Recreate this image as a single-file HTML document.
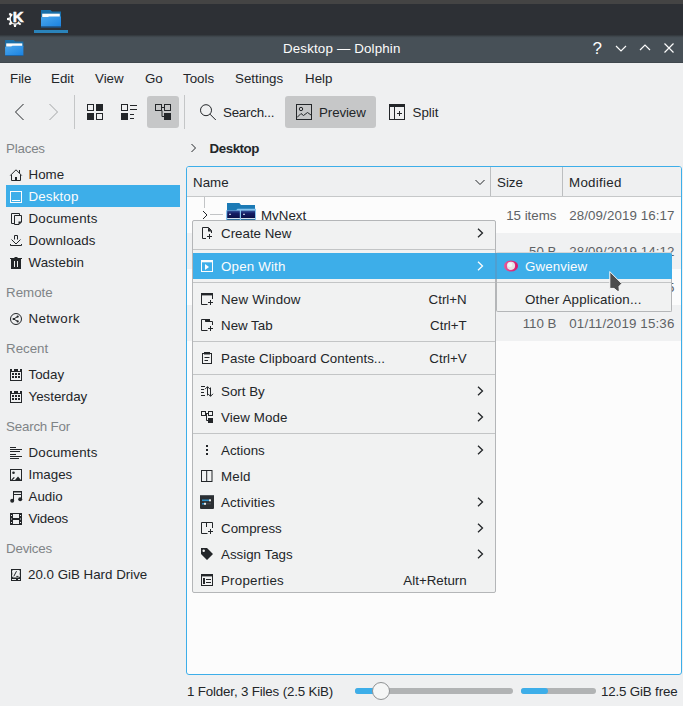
<!DOCTYPE html>
<html><head><meta charset="utf-8"><title>Desktop — Dolphin</title>
<style>
*{box-sizing:border-box;margin:0;padding:0}
html,body{width:683px;height:706px;overflow:hidden;background:#eff0f1}
body{position:relative;font-family:"Liberation Sans",sans-serif;font-size:13.33px;color:#232629;line-height:16px}
.a{position:absolute;white-space:nowrap}
svg{position:absolute;overflow:visible}
.t{position:absolute;white-space:nowrap;height:16px;line-height:16px;margin-top:2px}
.g{color:#7f8487}
.w{color:#fcfcfc}
.i{color:#5e6265}
.sep{position:absolute;background:#c3c5c6;height:1px}
.s{fill:none;stroke:#232629;stroke-width:1}
.f{fill:#232629;stroke:none}
</style></head><body>

<div class="a" style="left:0px;top:0px;width:683px;height:4px;background:#444444;"></div>
<div class="a" style="left:0px;top:4px;width:683px;height:31px;background:#2d3035;"></div>
<div class="a" style="left:34px;top:30px;width:34px;height:3px;background:#2a83ba;"></div>
<div class="a" style="left:0px;top:35px;width:683px;height:28px;background:linear-gradient(#30353a 0,#444c53 2px,#475057 3px);"></div>
<div class="a" style="left:0px;top:62px;width:683px;height:1px;background:#3f474d;"></div>
<svg style="left:6px;top:9px" width="18" height="20" viewBox="0 0 18 20"><path d="M13.73 11.27A4.90 4.90 0 1 1 7.73 5.27" fill="none" stroke="#fcfcfc" stroke-width="1.40"/><path d="M11.62 14.74L14.02 16.29L15.29 15.02L13.74 12.62ZM7.50 15.20L8.10 18.00L9.90 18.00L10.50 15.20ZM4.26 12.62L2.71 15.02L3.98 16.29L6.38 14.74ZM3.80 8.50L1.00 9.10L1.00 10.90L3.80 11.50ZM6.38 5.26L3.98 3.71L2.71 4.98L4.26 7.38Z" fill="#fcfcfc"/><text x="6.7" y="13" font-family="Liberation Sans,sans-serif" font-weight="bold" font-size="15" fill="#2d3035" stroke="#2d3035" stroke-width="2.6">K</text><text x="6.7" y="13" font-family="Liberation Sans,sans-serif" font-weight="bold" font-size="15" fill="#fcfcfc" stroke="#fcfcfc" stroke-width="0.5">K</text></svg>
<svg style="left:41px;top:10px" width="20" height="17.5" viewBox="0 0 20 17.5"><defs><linearGradient id="fg41" x1="0" y1="0" x2="1" y2="1"><stop offset="0" stop-color="#4aa8ee"/><stop offset="1" stop-color="#1b82e0"/></linearGradient></defs>
<path d="M0 0H9.500L11 1.600H20V8H0Z" fill="#1a6fa8"/><rect x="1.200" y="3.700" width="17.600" height="3.600" fill="#fcfcfc"/><path d="M0 7.300H6.500L8 6.400H20V16.600H0Z" fill="url(#fg41)"/><rect x="0" y="16.600" width="20" height="0.900" fill="#1565b0"/></svg>
<svg style="left:5px;top:40px" width="18.5" height="16" viewBox="0 0 20 17.5"><defs><linearGradient id="fg5" x1="0" y1="0" x2="1" y2="1"><stop offset="0" stop-color="#4aa8ee"/><stop offset="1" stop-color="#1b82e0"/></linearGradient></defs>
<path d="M0 0H9.500L11 1.600H20V8H0Z" fill="#1a6fa8"/><rect x="1.200" y="3.700" width="17.600" height="3.600" fill="#fcfcfc"/><path d="M0 7.300H6.500L8 6.400H20V16.600H0Z" fill="url(#fg5)"/><rect x="0" y="16.600" width="20" height="0.900" fill="#1565b0"/></svg>
<div class="t w" style="left:283px;top:39px;letter-spacing:0.16px">Desktop — Dolphin</div>
<svg style="left:583px;top:35px" width="100" height="28" viewBox="0 0 100 28"><g fill="none" stroke="#fcfcfc" stroke-width="1.2"><path d="M33 11 L38 16 L43 11"/><path d="M57 15 L62 10 L67 15"/><path d="M81.5 8.5 L90.5 17.5 M90.5 8.5 L81.5 17.5"/></g></svg>
<div class="t w" style="left:593px;top:39px;font-size:17px;left:592.5px">?</div>
<div class="t " style="left:10px;top:69px;">File</div>
<div class="t " style="left:51px;top:69px;">Edit</div>
<div class="t " style="left:95px;top:69px;">View</div>
<div class="t " style="left:145px;top:69px;">Go</div>
<div class="t " style="left:183px;top:69px;">Tools</div>
<div class="t " style="left:235px;top:69px;">Settings</div>
<div class="t " style="left:305px;top:69px;">Help</div>
<div class="a" style="left:74px;top:95px;width:1px;height:34px;background:#c4c6c7;"></div>
<div class="a" style="left:184px;top:95px;width:1px;height:34px;background:#c4c6c7;"></div>
<div class="a" style="left:147px;top:96px;width:32px;height:32px;background:#c6c7c8;border-radius:3px"></div>
<div class="a" style="left:285px;top:96px;width:91px;height:32px;background:#c6c7c8;border-radius:3px"></div>
<svg style="left:11px;top:101px" width="22" height="22" viewBox="0 0 22 22"><path class="s" stroke-width="1.1" d="M12.5 3 L4.5 11 L12.5 19"/></svg>
<svg style="left:45px;top:101px" width="22" height="22" viewBox="0 0 22 22"><path class="s" style="stroke:#a3a5a6" stroke-width="1.1" d="M4.5 3 L12.5 11 L4.5 19"/></svg>
<svg style="left:84px;top:101px" width="22" height="22" viewBox="0 0 22 22"><rect class="s" x="3.5" y="3.5" width="6" height="6"/><rect class="f" x="12" y="3" width="7" height="7"/><rect class="f" x="3" y="12" width="7" height="7"/><rect class="s" x="12.5" y="12.5" width="6" height="6"/></svg>
<svg style="left:118px;top:101px" width="22" height="22" viewBox="0 0 22 22"><rect class="s" x="3.5" y="3.5" width="6" height="6"/><rect class="f" x="3" y="12" width="7" height="7"/><path class="s" d="M12 4.5H19M12 8.5H19M12 13.5H16M12 17.5H16"/></svg>
<svg style="left:152px;top:101px" width="22" height="22" viewBox="0 0 22 22"><rect class="s" x="3.5" y="3.5" width="6" height="6"/><rect class="s" x="12.5" y="3.5" width="6" height="6"/><rect class="f" x="12" y="12" width="7" height="7"/><path class="s" d="M10 6.500H12M10 9.500V15.500H12" stroke-width="1.100"/></svg>
<svg style="left:196px;top:101px" width="22" height="22" viewBox="0 0 22 22"><circle class="s" cx="10" cy="9.200" r="5.500" stroke-width="1.3"/><path class="s" stroke-width="1.4" d="M13.900 13.100 L19.800 19"/></svg>
<div class="t " style="left:223px;top:103px;letter-spacing:-0.23px;">Search...</div>
<svg style="left:293px;top:101px" width="22" height="22" viewBox="0 0 22 22"><rect class="s" x="3.5" y="3.5" width="15" height="15"/><circle class="s" cx="8" cy="8" r="1.7"/><path class="s" d="M4 16.5 L8 12.5 L10.5 14.5 L14.5 11.5 L18 14"/></svg>
<div class="t " style="left:319px;top:103px;letter-spacing:-0.1px;">Preview</div>
<svg style="left:386px;top:101px" width="22" height="22" viewBox="0 0 22 22"><rect class="s" x="3.5" y="3.5" width="15" height="15"/><rect class="f" x="3" y="3" width="16" height="3"/><path class="s" d="M8.500 5V18.500M11 12.500H16M13.500 10V15"/></svg>
<div class="t " style="left:412.5px;top:103px;">Split</div>
<div class="t g" style="left:6px;top:139px;letter-spacing:-0.2px;">Places</div>
<svg style="left:8px;top:167px" width="16" height="16" viewBox="0 0 16 16"><path class="s" d="M2.3 8.5 L8 2.8 L13.7 8.5" stroke-width="1.2"/><path class="s" d="M3.5 8V13.5H12.5V8"/><rect class="f" x="7" y="10" width="2" height="4"/><rect class="f" x="11" y="3" width="1" height="3"/></svg>
<div class="t " style="left:28.5px;top:165px;">Home</div>
<div class="a" style="left:6px;top:185px;width:174px;height:22px;background:#3daee9;"></div>
<svg style="left:8px;top:189px" width="16" height="16" viewBox="0 0 16 16"><rect x="2.5" y="2.5" width="11" height="11" fill="none" stroke="#fcfcfc"/><rect x="4" y="11" width="8" height="1" fill="#fcfcfc"/></svg>
<div class="t w" style="left:28.5px;top:187px;letter-spacing:0.15px">Desktop</div>
<svg style="left:8px;top:211px" width="16" height="16" viewBox="0 0 16 16"><path class="s" d="M11.5 4V2.500H3.500V12.500H6" stroke-width="1.1"/><path class="s" d="M6.500 4.500H13.500V11L11 13.500H6.500Z" stroke-width="1.1"/><path class="f" d="M14 10.500H10.500V14Z"/></svg>
<div class="t " style="left:28.5px;top:209px;letter-spacing:0.18px;">Documents</div>
<svg style="left:8px;top:233px" width="16" height="16" viewBox="0 0 16 16"><path class="s" d="M6.500 6.500V2.500H9.500V6.500"/><path class="s" d="M3.500 6.500 L8 11 L12.500 6.500" stroke-width="1.1"/><path class="s" d="M2.500 11V12.500H13.500V11"/></svg>
<div class="t " style="left:28.5px;top:231px;letter-spacing:0.12px;">Downloads</div>
<svg style="left:8px;top:255px" width="16" height="16" viewBox="0 0 16 16"><path class="f" d="M6.500 2H9.500V3H14V4H13V14H3V4H2V3H6.500Z"/><rect x="6" y="6" width="1" height="6" fill="#eff0f1"/><rect x="9" y="6" width="1" height="6" fill="#eff0f1"/></svg>
<div class="t " style="left:28.5px;top:253px;letter-spacing:0.06px;">Wastebin</div>
<div class="t g" style="left:6px;top:283px;">Remote</div>
<svg style="left:8px;top:311px" width="16" height="16" viewBox="0 0 16 16"><circle class="s" cx="8" cy="8" r="5.5"/><circle class="f" cx="5.600" cy="8" r="1.1"/><circle class="f" cx="9.700" cy="5.600" r="1.1"/><circle class="f" cx="9.700" cy="10.400" r="1.1"/><path class="s" stroke-width="0.6" d="M9.700 5.600 L5.600 8 L9.700 10.400"/></svg>
<div class="t " style="left:28.5px;top:309px;letter-spacing:0.37px;">Network</div>
<div class="t g" style="left:6px;top:339px;">Recent</div>
<svg style="left:8px;top:367px" width="16" height="16" viewBox="0 0 16 16"><path class="f" fill-rule="evenodd" d="M2 2H4V4H6V2H10V4H12V2H14V14H2Z M3 5V13H13V5Z"/><path class="f" d="M4 6h2v2H4zM7 6h2v2H7zM10 6h2v2h-2zM4 9h2v2H4zM7 9h2v2H7zM10 9h2v2h-2z"/></svg>
<div class="t " style="left:28.5px;top:365px;">Today</div>
<svg style="left:8px;top:389px" width="16" height="16" viewBox="0 0 16 16"><path class="f" fill-rule="evenodd" d="M2 2H4V4H6V2H10V4H12V2H14V14H2Z M3 5V13H13V5Z"/><path class="f" d="M4 6h2v2H4zM7 6h2v2H7zM10 6h2v2h-2zM4 9h2v2H4zM7 9h2v2H7zM10 9h2v2h-2z"/></svg>
<div class="t " style="left:28.5px;top:387px;">Yesterday</div>
<div class="t g" style="left:6px;top:417px;letter-spacing:-0.19px;">Search For</div>
<svg style="left:8px;top:445px" width="16" height="16" viewBox="0 0 16 16"><path class="f" d="M2 2h6v1H2zM2 4h12v1H2zM2 6h10v1H2zM2 9h6v1H2zM2 11h12v1H2zM2 13h9v1H2z"/></svg>
<div class="t " style="left:28.5px;top:443px;letter-spacing:0.18px;">Documents</div>
<svg style="left:8px;top:467px" width="16" height="16" viewBox="0 0 16 16"><rect class="s" x="2.500" y="2.500" width="11" height="11"/><circle class="f" cx="5.500" cy="5.700" r="1.3"/><path class="f" d="M3 13 L5.800 10 L6.800 10.800 L4.600 13Z M7 13 L10 9.500 L13 13Z"/></svg>
<div class="t " style="left:28.5px;top:465px;">Images</div>
<svg style="left:8px;top:489px" width="16" height="16" viewBox="0 0 16 16"><path class="f" d="M5 2H14V10.500H13V6H6V12H5Z M6 3.500V5H13V3.500Z" fill-rule="evenodd"/><circle class="f" cx="4.200" cy="11.800" r="2"/><circle class="f" cx="12.200" cy="10.200" r="2"/></svg>
<div class="t " style="left:28.5px;top:487px;">Audio</div>
<svg style="left:8px;top:511px" width="16" height="16" viewBox="0 0 16 16"><path class="f" fill-rule="evenodd" d="M2 2H14V14H2Z M5 3V7H11V3Z M5 9V13H11V9Z M3 4h1v1H3z M3 7.500h1v1H3z M3 11h1v1H3z M12 4h1v1h-1z M12 7.500h1v1h-1z M12 11h1v1h-1z"/></svg>
<div class="t " style="left:28.5px;top:509px;letter-spacing:-0.15px;">Videos</div>
<div class="t g" style="left:6px;top:539px;letter-spacing:-0.2px;">Devices</div>
<svg style="left:8px;top:567px" width="16" height="16" viewBox="0 0 16 16"><path class="f" fill-rule="evenodd" d="M3 2H13V14H3Z M5 3 Q4 3 4 4.500 Q4.600 6.500 4 8.500 Q4 10.500 5.500 10.500 H10.500 Q12 10.500 12 8.500 Q11.400 6.500 12 4.500 Q12 3 11 3Z M4 12V13H8V12Z M10 12V13H12V12Z"/><path class="s" d="M5.800 9.300 L8.500 4.200" stroke-width="0.9"/><path class="s" d="M8.300 9.400H10.500" stroke-width="0.9"/></svg>
<div class="t " style="left:28px;top:565px;">20.0 GiB Hard Drive</div>
<svg style="left:190px;top:143px" width="8" height="10" viewBox="0 0 8 10"><path class="s" stroke-width="1.350" d="M1.500 1 L5.500 5 L1.500 9"/></svg>
<div class="t " style="left:209.5px;top:139px;font-weight:bold;letter-spacing:-0.44px">Desktop</div>
<div class="a" style="left:186px;top:166px;width:496px;height:509px;background:#fcfcfc;border:1px solid #3daee9;border-radius:3px"></div>
<div class="a" style="left:187px;top:167px;width:494px;height:30px;background:#eff0f1;border-bottom:1px solid #c6c8c9;border-radius:2px 2px 0 0"></div>
<div class="a" style="left:490px;top:167px;width:1px;height:29px;background:#bcbec0;"></div>
<div class="a" style="left:562px;top:167px;width:1px;height:29px;background:#bcbec0;"></div>
<div class="t " style="left:193px;top:173px;">Name</div>
<div class="t " style="left:497px;top:173px;">Size</div>
<div class="t " style="left:569px;top:173px;letter-spacing:0.3px;">Modified</div>
<svg style="left:474px;top:177px" width="12" height="10" viewBox="0 0 12 10"><path class="s" stroke-width="1.400" d="M1.500 3 L6 7.500 L10.500 3"/></svg>
<div class="a" style="left:187px;top:233px;width:494px;height:36px;background:#f0f1f2;"></div>
<div class="a" style="left:187px;top:305px;width:494px;height:36px;background:#f0f1f2;"></div>
<div class="a" style="left:204px;top:197px;width:1px;height:11px;background:#c2c4c6;"></div>
<div class="a" style="left:210px;top:214px;width:13px;height:1px;background:#c2c4c6;"></div>
<svg style="left:201px;top:210px" width="8" height="10" viewBox="0 0 8 10"><path class="s" stroke-width="1.300" d="M2 1 L6 5 L2 9"/></svg>
<svg style="left:226px;top:202.8px" width="30" height="18" viewBox="0 0 30 18"><defs><linearGradient id="th" x1="0" y1="0" x2="0" y2="1"><stop offset="0" stop-color="#35579e"/><stop offset="0.35" stop-color="#141d66"/><stop offset="1" stop-color="#0a0f45"/></linearGradient></defs><path d="M1 0H13.300L15 2H29V8H1Z" fill="#1b7ab5"/><path d="M0 7.200H10L11.500 5.800H30V18H0Z" fill="#86c4ee"/><rect x="1.200" y="7.600" width="12.600" height="7.600" fill="url(#th)"/><rect x="15" y="7.600" width="14" height="7.600" fill="url(#th)"/><rect x="3" y="10.800" width="2" height="1" fill="#dfe6f2"/><rect x="17" y="10.800" width="2" height="1" fill="#dfe6f2"/><rect x="1.200" y="15.200" width="12.600" height="0.800" fill="#eef2f6"/><rect x="15" y="15.200" width="14" height="0.800" fill="#eef2f6"/><rect x="1.200" y="16" width="12.600" height="2" fill="#2f6f9c"/><rect x="15" y="16" width="14" height="2" fill="#2f6f9c"/></svg>
<div class="t " style="left:261px;top:206px;">MyNext</div>
<div class="t i" style="right:126.5px;top:206px;">15 items</div>
<div class="t i" style="left:569.3px;top:206px;letter-spacing:0.09px;">28/09/2019 16:17</div>
<div class="t i" style="right:126.5px;top:242px;">50 B</div>
<div class="t i" style="left:569.3px;top:242px;letter-spacing:0.09px;">28/09/2019 14:12</div>
<div class="t i" style="left:569.3px;top:278px;letter-spacing:0.09px;">28/09/2019 14:15</div>
<div class="t i" style="right:126.5px;top:314px;">110 B</div>
<div class="t i" style="left:569.3px;top:314px;letter-spacing:0.15px;">01/11/2019 15:36</div>
<div class="a" style="left:192px;top:220px;width:304px;height:373px;background:#f1f2f2;border:1px solid #b4b6b8;border-radius:2px"></div>
<div class="a" style="left:193px;top:253px;width:302px;height:26px;background:#3daee9;"></div>
<div class="sep" style="left:193px;top:249px;width:302px"></div>
<div class="sep" style="left:193px;top:282px;width:302px"></div>
<div class="sep" style="left:193px;top:341px;width:302px"></div>
<div class="sep" style="left:193px;top:374px;width:302px"></div>
<div class="sep" style="left:193px;top:433px;width:302px"></div>
<div class="t " style="left:221px;top:224px;">Create New</div>
<svg style="left:477px;top:227px" width="8" height="12" viewBox="0 0 8 12"><path fill="none" stroke="#232629" stroke-width="1.300" d="M1 1.700 L5.500 6 L1 10.300"/></svg>
<div class="t w" style="left:221px;top:257px;letter-spacing:0.18px;">Open With</div>
<svg style="left:477px;top:260px" width="8" height="12" viewBox="0 0 8 12"><path fill="none" stroke="#fcfcfc" stroke-width="1.300" d="M1 1.700 L5.500 6 L1 10.300"/></svg>
<div class="t " style="left:221px;top:290px;letter-spacing:0.19px;">New Window</div>
<div class="t " style="right:216.3px;top:290px;">Ctrl+N</div>
<div class="t " style="left:221px;top:316px;">New Tab</div>
<div class="t " style="right:216.3px;top:316px;">Ctrl+T</div>
<div class="t " style="left:221px;top:349px;letter-spacing:0.04px">Paste Clipboard Contents...</div>
<div class="t " style="right:216.3px;top:349px;">Ctrl+V</div>
<div class="t " style="left:221px;top:382px;">Sort By</div>
<svg style="left:477px;top:385px" width="8" height="12" viewBox="0 0 8 12"><path fill="none" stroke="#232629" stroke-width="1.300" d="M1 1.700 L5.500 6 L1 10.300"/></svg>
<div class="t " style="left:221px;top:408px;letter-spacing:0.1px;">View Mode</div>
<svg style="left:477px;top:411px" width="8" height="12" viewBox="0 0 8 12"><path fill="none" stroke="#232629" stroke-width="1.300" d="M1 1.700 L5.500 6 L1 10.300"/></svg>
<div class="t " style="left:221px;top:441px;">Actions</div>
<svg style="left:477px;top:444px" width="8" height="12" viewBox="0 0 8 12"><path fill="none" stroke="#232629" stroke-width="1.300" d="M1 1.700 L5.500 6 L1 10.300"/></svg>
<div class="t " style="left:221px;top:467px;letter-spacing:0.2px;">Meld</div>
<div class="t " style="left:221px;top:493px;letter-spacing:0.15px;">Activities</div>
<svg style="left:477px;top:496px" width="8" height="12" viewBox="0 0 8 12"><path fill="none" stroke="#232629" stroke-width="1.300" d="M1 1.700 L5.500 6 L1 10.300"/></svg>
<div class="t " style="left:221px;top:519px;">Compress</div>
<svg style="left:477px;top:522px" width="8" height="12" viewBox="0 0 8 12"><path fill="none" stroke="#232629" stroke-width="1.300" d="M1 1.700 L5.500 6 L1 10.300"/></svg>
<div class="t " style="left:221px;top:545px;">Assign Tags</div>
<svg style="left:477px;top:548px" width="8" height="12" viewBox="0 0 8 12"><path fill="none" stroke="#232629" stroke-width="1.300" d="M1 1.700 L5.500 6 L1 10.300"/></svg>
<div class="t " style="left:221px;top:571px;letter-spacing:0.22px;">Properties</div>
<div class="t " style="right:216.3px;top:571px;">Alt+Return</div>
<svg style="left:199px;top:225px" width="16" height="16" viewBox="0 0 16 16"><path class="s" d="M7 13.500H3.500V2.500H9.500L12.500 5.500V8"/><path class="f" d="M9 2.500L13 6.500H9Z"/><path class="s" d="M8 11.500H13M10.500 9V14"/></svg>
<svg style="left:199px;top:258px" width="16" height="16" viewBox="0 0 16 16"><rect x="2.500" y="2.500" width="11" height="11" fill="none" stroke="#fcfcfc"/><rect x="2" y="2" width="12" height="2.300" fill="#fcfcfc"/><path d="M6 6L10 9L6 12Z" fill="#fcfcfc"/></svg>
<svg style="left:199px;top:291px" width="16" height="16" viewBox="0 0 16 16"><path class="s" d="M8.500 13.500H2.500V2.500H13.500V8"/><rect class="f" x="2" y="2" width="12" height="2.400"/><path class="s" d="M9 11.500H14M11.500 9V14"/></svg>
<svg style="left:199px;top:317px" width="16" height="16" viewBox="0 0 16 16"><path class="s" d="M8.500 13.500H2.500V2.500H6.500V4.500H13.500V8"/><rect class="f" x="6" y="2" width="5" height="2.500"/><path class="s" d="M9 11.500H14M11.500 9V14"/></svg>
<svg style="left:199px;top:350px" width="16" height="16" viewBox="0 0 16 16"><rect class="s" x="3.500" y="3.500" width="9" height="10"/><rect class="f" x="5" y="2" width="6" height="2.500"/><path class="s" d="M5.500 7.500H10.500M5.500 10.500H9"/></svg>
<svg style="left:199px;top:383px" width="16" height="16" viewBox="0 0 16 16"><path class="s" d="M2 3.500H6M2 6.500H5M2 9.500H5M2 12.500H6"/><path class="s" stroke-width="1.100" d="M8.500 12.500V3.700M6 6.200L8.500 3.700L11 6.200"/><path class="s" stroke-width="1.100" d="M11.500 4.500V13.300M9 10.800L11.500 13.300L14 10.800"/></svg>
<svg style="left:199px;top:409px" width="16" height="16" viewBox="0 0 16 16"><rect class="s" x="2.500" y="2.500" width="4" height="4"/><rect class="s" x="9.500" y="2.500" width="4" height="4"/><rect class="f" x="9" y="9" width="5" height="5"/><path class="s" d="M6.500 4.500H9.500M7.500 5V11.500H9"/></svg>
<svg style="left:199px;top:442px" width="16" height="16" viewBox="0 0 16 16"><path class="f" d="M7 3h2v2H7zM7 7h2v2H7zM7 11h2v2H7z"/></svg>
<svg style="left:199px;top:468px" width="16" height="16" viewBox="0 0 16 16"><rect class="s" x="2.500" y="2.500" width="10.500" height="11"/><path class="s" d="M7.700 2.500V13.500"/></svg>
<svg style="left:199px;top:494px" width="16" height="16" viewBox="0 0 16 16"><rect x="1" y="1" width="14" height="14" rx="1" fill="#2b2f33"/><rect x="1" y="1" width="14" height="1" fill="#50565b"/><rect x="3" y="5.500" width="7" height="1.600" fill="#2f8fc6"/><rect x="10" y="5.300" width="2" height="2" fill="#e8eaeb"/><rect x="3" y="9" width="2" height="1.600" fill="#2f8fc6"/><rect x="5" y="8.800" width="2" height="2" fill="#e8eaeb"/><rect x="7" y="9.300" width="5" height="1" fill="#4a5056"/></svg>
<svg style="left:199px;top:520px" width="16" height="16" viewBox="0 0 16 16"><path class="s" d="M8.500 13.500H2.500V2.500H13.500V8"/><path class="s" stroke-width="0.9" d="M8 3L7 4L8 5L7 6L8 7"/><path class="s" d="M9 11.500H14M11.500 9V14"/></svg>
<svg style="left:199px;top:546px" width="16" height="16" viewBox="0 0 16 16"><path class="f" fill-rule="evenodd" d="M2 2H8L14 8L8 14L2 8Z M4.700 3.400A1.250 1.250 0 1 0 4.700 5.900A1.250 1.250 0 1 0 4.700 3.400Z"/></svg>
<svg style="left:199px;top:572px" width="16" height="16" viewBox="0 0 16 16"><rect class="s" x="2.500" y="2.500" width="11" height="11"/><rect class="f" x="2" y="2" width="12" height="2.400"/><rect class="f" x="4" y="6" width="2" height="6"/><path class="s" d="M7 7.500H12M7 10.500H12"/></svg>
<div class="a" style="left:496px;top:252px;width:176px;height:60px;background:#f1f2f2;border:1px solid #b4b6b8;border-top-color:#d4d6d7;border-radius:2px"></div>
<div class="a" style="left:497px;top:253px;width:175px;height:26px;background:#3daee9;border-radius:0 2px 0 0"></div>
<div class="sep" style="left:497px;top:282px;width:174px"></div>
<div class="a" style="left:495px;top:253px;width:2px;height:26px;background:#4f9fd0;"></div>
<svg style="left:503px;top:259px" width="16" height="14" viewBox="0 0 16 14"><defs><linearGradient id="gw" x1="0" y1="0" x2="1" y2="0"><stop offset="0" stop-color="#e85a9a"/><stop offset="1" stop-color="#d4136a"/></linearGradient></defs><ellipse cx="8" cy="7" rx="7" ry="5.600" fill="url(#gw)"/><circle cx="8" cy="6.800" r="4.100" fill="#e6e3e6"/><circle cx="7" cy="5.800" r="2.300" fill="#f6f5f6"/></svg>
<div class="t w" style="left:525px;top:257px;letter-spacing:0.1px">Gwenview</div>
<div class="t " style="left:525px;top:290px;letter-spacing:0.2px">Other Application...</div>
<svg style="left:608px;top:270px" width="16" height="24" viewBox="0 0 16 24"><path d="M1.800 1.600V18.400H6L10 21.600L11.300 21L11 16.400L13.800 13.600Z" fill="#4d4d4d" stroke="#fcfcfc" stroke-width="1" stroke-linejoin="round"/></svg>
<div class="t " style="left:187px;top:682px;letter-spacing:-0.16px">1 Folder, 3 Files (2.5 KiB)</div>
<div class="t " style="left:601px;top:682px;letter-spacing:-0.16px;">12.5 GiB free</div>
<div class="a" style="left:355px;top:688px;width:158px;height:6px;background:#b1b3b4;border-radius:3px"></div>
<div class="a" style="left:355px;top:688px;width:26px;height:6px;background:#3daee9;border-radius:3px"></div>
<div class="a" style="left:372px;top:682px;width:18px;height:18px;background:#f5f6f6;border-radius:50%;border:1px solid #8f9294"></div>
<div class="a" style="left:521px;top:688px;width:75px;height:6px;background:#b1b3b4;border-radius:3px"></div>
<div class="a" style="left:521px;top:688px;width:27px;height:6px;background:#3daee9;border-radius:3px"></div>
</body></html>
